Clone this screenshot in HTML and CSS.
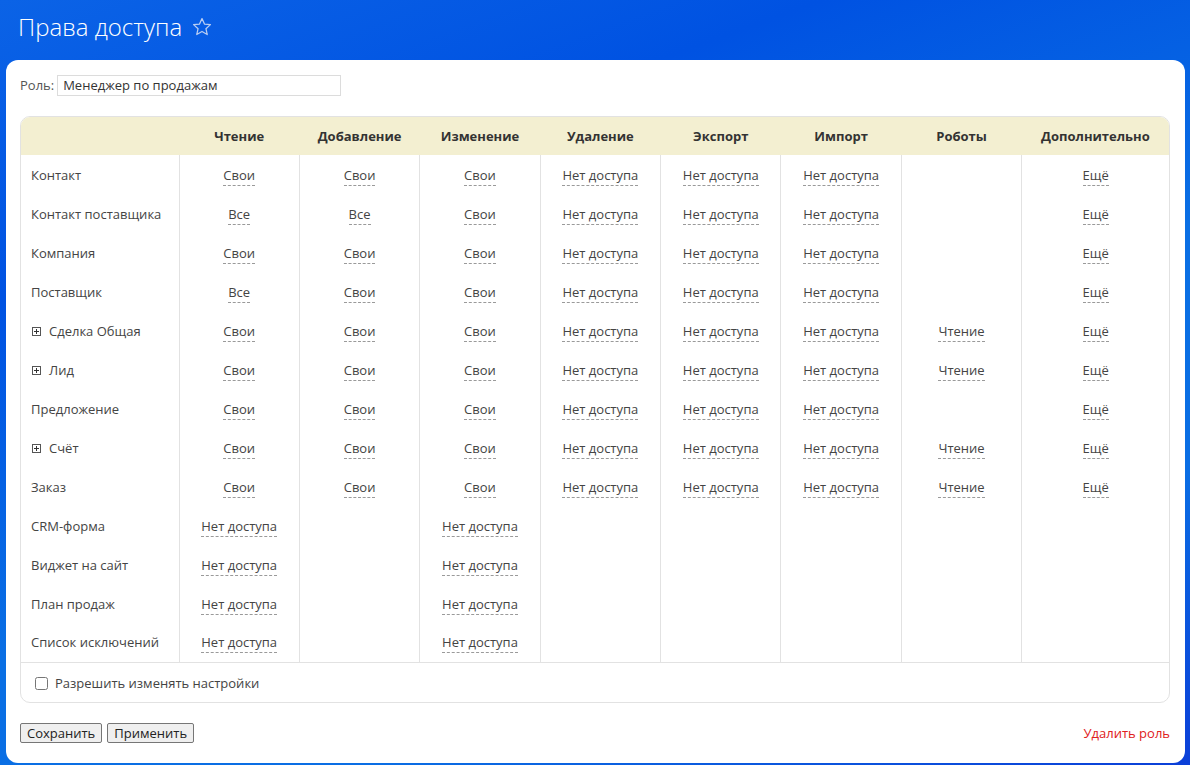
FILE: index.html
```html
<!DOCTYPE html>
<html lang="ru">
<head>
<meta charset="utf-8">
<title>Права доступа</title>
<link rel="stylesheet" href="styles.css">
</head>
<body>
<div class="page">
  <header class="topbar">
    <h1 class="title">Права доступа</h1>
    <svg class="star" width="22" height="22" viewBox="0 0 24 24"><path d="M12 2.8l2.7 6 6.5.6-4.9 4.4 1.4 6.4L12 16.9l-5.7 3.3 1.4-6.4-4.9-4.4 6.5-.6z" fill="none" stroke="#b9cdf2" stroke-width="1.4" stroke-linejoin="round"/></svg>
  </header>
  <main class="card">
    <div class="role">
      <label class="role-label">Роль:</label>
      <input class="role-input" type="text" value="Менеджер по продажам">
    </div>
    <div class="grid-wrap">
      <table class="grid">
        <colgroup>
          <col class="c-name"><col class="c-perm"><col class="c-perm"><col class="c-perm"><col class="c-perm"><col class="c-perm"><col class="c-perm"><col class="c-perm"><col class="c-more">
        </colgroup>
        <thead>
          <tr>
            <th></th><th>Чтение</th><th>Добавление</th><th>Изменение</th><th>Удаление</th><th>Экспорт</th><th>Импорт</th><th>Роботы</th><th>Дополнительно</th>
          </tr>
        </thead>
        <tbody>
          <tr><td class="name">Контакт</td><td><a>Свои</a></td><td><a>Свои</a></td><td><a>Свои</a></td><td><a>Нет доступа</a></td><td><a>Нет доступа</a></td><td><a>Нет доступа</a></td><td></td><td><a>Ещё</a></td></tr>
          <tr><td class="name">Контакт поставщика</td><td><a>Все</a></td><td><a>Все</a></td><td><a>Свои</a></td><td><a>Нет доступа</a></td><td><a>Нет доступа</a></td><td><a>Нет доступа</a></td><td></td><td><a>Ещё</a></td></tr>
          <tr><td class="name">Компания</td><td><a>Свои</a></td><td><a>Свои</a></td><td><a>Свои</a></td><td><a>Нет доступа</a></td><td><a>Нет доступа</a></td><td><a>Нет доступа</a></td><td></td><td><a>Ещё</a></td></tr>
          <tr><td class="name">Поставщик</td><td><a>Все</a></td><td><a>Свои</a></td><td><a>Свои</a></td><td><a>Нет доступа</a></td><td><a>Нет доступа</a></td><td><a>Нет доступа</a></td><td></td><td><a>Ещё</a></td></tr>
          <tr><td class="name"><span class="plus"></span>Сделка Общая</td><td><a>Свои</a></td><td><a>Свои</a></td><td><a>Свои</a></td><td><a>Нет доступа</a></td><td><a>Нет доступа</a></td><td><a>Нет доступа</a></td><td><a>Чтение</a></td><td><a>Ещё</a></td></tr>
          <tr><td class="name"><span class="plus"></span>Лид</td><td><a>Свои</a></td><td><a>Свои</a></td><td><a>Свои</a></td><td><a>Нет доступа</a></td><td><a>Нет доступа</a></td><td><a>Нет доступа</a></td><td><a>Чтение</a></td><td><a>Ещё</a></td></tr>
          <tr><td class="name">Предложение</td><td><a>Свои</a></td><td><a>Свои</a></td><td><a>Свои</a></td><td><a>Нет доступа</a></td><td><a>Нет доступа</a></td><td><a>Нет доступа</a></td><td></td><td><a>Ещё</a></td></tr>
          <tr><td class="name"><span class="plus"></span>Счёт</td><td><a>Свои</a></td><td><a>Свои</a></td><td><a>Свои</a></td><td><a>Нет доступа</a></td><td><a>Нет доступа</a></td><td><a>Нет доступа</a></td><td><a>Чтение</a></td><td><a>Ещё</a></td></tr>
          <tr><td class="name">Заказ</td><td><a>Свои</a></td><td><a>Свои</a></td><td><a>Свои</a></td><td><a>Нет доступа</a></td><td><a>Нет доступа</a></td><td><a>Нет доступа</a></td><td><a>Чтение</a></td><td><a>Ещё</a></td></tr>
          <tr><td class="name">CRM-форма</td><td><a>Нет доступа</a></td><td></td><td><a>Нет доступа</a></td><td></td><td></td><td></td><td></td><td></td></tr>
          <tr><td class="name">Виджет на сайт</td><td><a>Нет доступа</a></td><td></td><td><a>Нет доступа</a></td><td></td><td></td><td></td><td></td><td></td></tr>
          <tr><td class="name">План продаж</td><td><a>Нет доступа</a></td><td></td><td><a>Нет доступа</a></td><td></td><td></td><td></td><td></td><td></td></tr>
          <tr><td class="name">Список исключений</td><td><a>Нет доступа</a></td><td></td><td><a>Нет доступа</a></td><td></td><td></td><td></td><td></td><td></td></tr>
        </tbody>
        <tfoot>
          <tr><td colspan="9" class="foot"><label class="check"><input type="checkbox"><span>Разрешить изменять настройки</span></label></td></tr>
        </tfoot>
      </table>
    </div>
    <div class="actions">
      <div class="buttons">
        <button class="btn" type="button">Сохранить</button>
        <button class="btn" type="button">Применить</button>
      </div>
      <a class="delete">Удалить роль</a>
    </div>
  </main>
</div>
</body>
</html>
```
FILE: styles.css
```css
* { box-sizing: border-box; }
html, body { margin: 0; height: 100%; }
body {
  font-family: "Open Sans", "Liberation Sans", sans-serif;
  font-size: 13px;
  color: #333;
  background: linear-gradient(160deg, #0b63e6 0%, #0052e2 25%, #0a6fe4 55%, #0a6ee4 75%, #0b3fd8 100%);
  overflow: hidden;
}
.page { padding: 0 5px 0 6px; }
.topbar {
  height: 60px;
  display: flex;
  align-items: center;
  padding: 0 0 8px 12px;
}
.title {
  margin: 0;
  font-size: 24px;
  font-weight: 300;
  color: #fff;
  letter-spacing: 0;
}
.star { margin-left: 9px; margin-top: 1px; }
.card {
  background: #fff;
  border-radius: 12px;
  padding: 14px 15px 17px 14px;
  height: 703px;
}
.role { display: flex; align-items: center; height: 22px; }
.role-label { color: #555; margin-right: 3px; }
.role-input {
  width: 284px;
  height: 21px;
  border: 1px solid #dcdcdc;
  font-family: inherit;
  font-size: 13px;
  color: #333;
  padding: 0 5px;
  outline: none;
}
.grid-wrap {
  margin-top: 20px;
  border: 1px solid #e2e2e2;
  border-radius: 10px;
  overflow: hidden;
}
.grid {
  width: 100%;
  border-collapse: collapse;
  table-layout: fixed;
}
.c-name { width: 158px; }
.c-perm { width: 120.4px; }
.c-more { width: auto; }
.grid thead th {
  background: #f3efd1;
  height: 38px;
  font-weight: 700;
  font-size: 13px;
  color: #333;
  text-align: center;
  padding: 0;
}
.grid tbody td {
  height: 39px;
  text-align: center;
  padding: 0;
  border-left: 1px solid #e2e2e2;
  vertical-align: middle;
}
.grid tbody td.name {
  border-left: none;
  text-align: left;
  padding-left: 10px;
  color: #444;
}
.grid tbody td a {
  color: #444;
  border-bottom: 1px dashed #9a9a9a;
  padding-bottom: 1px;
  cursor: pointer;
}
.plus {
  display: inline-block;
  width: 9px;
  height: 9px;
  border: 1px solid #555;
  margin: 0 8px 0 1px;
  position: relative;
  vertical-align: -0px;
}
.plus::before, .plus::after {
  content: "";
  position: absolute;
  background: #333;
}
.plus::before { left: 1px; right: 1px; top: 3px; height: 1px; }
.plus::after { top: 1px; bottom: 1px; left: 3px; width: 1px; }
.grid tfoot td.foot {
  border-top: 1px solid #e2e2e2;
  height: 40px;
  padding: 3px 0 0 14px;
}
.check { display: inline-flex; align-items: center; color: #444; }
.check input { margin: 0 7px 0 0; width: 13px; height: 13px; }
.actions {
  display: flex;
  justify-content: space-between;
  align-items: center;
  margin-top: 20px;
}
.buttons { display: flex; gap: 5px; }
.btn {
  font-family: inherit;
  font-size: 13px;
  color: #222;
  background: #efefef;
  border: 1px solid #767676;
  border-radius: 2px;
  height: 20px;
  padding: 0 6px;
  line-height: 16px;
}
.delete { color: #e02020; cursor: pointer; }
```
